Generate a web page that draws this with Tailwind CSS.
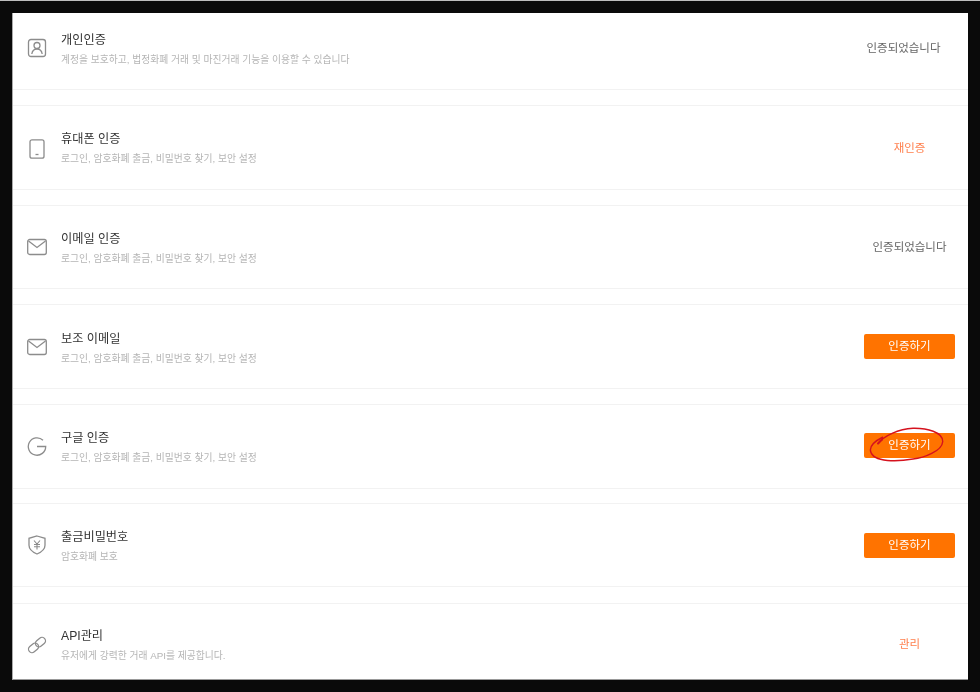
<!DOCTYPE html>
<html lang="ko">
<head>
    <meta charset="UTF-8">
    <title>보안 인증</title>
    <script src="https://cdn.jsdelivr.net/npm/@tailwindcss/browser@4"></script>
</head>
<body class="bg-[#0a0a0a] font-['Liberation_Sans','Noto_Sans_CJK_KR',sans-serif]">
    <div class="w-[980px] h-[692px] overflow-hidden border-t border-t-[#bdbdbd] pt-3 pl-3 pr-3 pb-3">
        <div class="bg-white h-[667px] overflow-hidden border-b border-b-[#999] border-l border-l-[#aaa] blur-[0.45px]">

            <!-- 개인인증 -->
            <div class="h-[77px] border-b border-[#f2f2f2] mb-[15px] pl-[14px] pr-[13px] pb-[5px] flex items-center justify-between">
                <div class="flex items-center">
                    <svg class="w-5 h-5 mr-[14px] mb-[2px]" viewBox="0 0 20 20" fill="none" stroke="#8c8c8c" stroke-width="1.3">
                        <rect x="1.500" y="1.500" width="17" height="17" rx="2.500"/>
                        <circle cx="10" cy="7.500" r="3"/>
                        <path d="M4.800 16c.5-3 2.500-5 5.200-5s4.700 2 5.200 5"/>
                    </svg>
                    <div class="pt-[3px]">
                        <p class="text-[12.2px] leading-4 text-[#333]">개인인증</p>
                        <p class="text-[9.8px] leading-4 mt-1 text-[#b5b5b5]">계정을 보호하고, 법정화폐 거래 및 마진거래 기능을 이용할 수 있습니다</p>
                    </div>
                </div>
                <span class="w-[103px] text-center text-[11.5px] text-[#666]">인증되었습니다</span>
            </div>

            <!-- 휴대폰 인증 -->
            <div class="h-[85px] border-y border-[#f2f2f2] mb-[15px] pl-[14px] pr-[13px] pt-[2px] flex items-center justify-between">
                <div class="flex items-center">
                    <svg class="w-5 h-5 mr-[14px]" viewBox="0 0 20 20" fill="none" stroke="#8c8c8c" stroke-width="1.3">
                        <rect x="3" y="0.800" width="14" height="18.400" rx="2"/>
                        <path d="M8.500 15.500h3"/>
                    </svg>
                    <div>
                        <p class="text-[12.2px] leading-4 text-[#333]">휴대폰 인증</p>
                        <p class="text-[9.8px] leading-4 mt-1 text-[#b5b5b5]">로그인, 암호화폐 출금, 비밀번호 찾기, 보안 설정</p>
                    </div>
                </div>
                <span class="w-[91px] text-center text-[11.5px] text-[#ff7f4d]">재인증</span>
            </div>

            <!-- 이메일 인증 -->
            <div class="h-[84px] border-y border-[#f2f2f2] mb-[15px] pl-[14px] pr-[13px] pt-[2px] flex items-center justify-between">
                <div class="flex items-center">
                    <svg class="w-5 h-5 mr-[14px] mb-[2px]" viewBox="0 0 20 20" fill="none" stroke="#8c8c8c" stroke-width="1.3">
                        <rect x="0.700" y="2.500" width="18.600" height="15" rx="2"/>
                        <path d="M1.500 4l8.500 6.500L18.500 4"/>
                    </svg>
                    <div class="pt-[2px]">
                        <p class="text-[12.2px] leading-4 text-[#333]">이메일 인증</p>
                        <p class="text-[9.8px] leading-4 mt-1 text-[#b5b5b5]">로그인, 암호화폐 출금, 비밀번호 찾기, 보안 설정</p>
                    </div>
                </div>
                <span class="w-[91px] text-center text-[11.5px] text-[#666]">인증되었습니다</span>
            </div>

            <!-- 보조 이메일 -->
            <div class="h-[85px] border-y border-[#f2f2f2] mb-[15px] pl-[14px] pr-[13px] pt-[2px] flex items-center justify-between">
                <div class="flex items-center">
                    <svg class="w-5 h-5 mr-[14px] mb-[2px]" viewBox="0 0 20 20" fill="none" stroke="#8c8c8c" stroke-width="1.3">
                        <rect x="0.700" y="2.500" width="18.600" height="15" rx="2"/>
                        <path d="M1.500 4l8.500 6.500L18.500 4"/>
                    </svg>
                    <div class="pt-[2px]">
                        <p class="text-[12.2px] leading-4 text-[#333]">보조 이메일</p>
                        <p class="text-[9.8px] leading-4 mt-1 text-[#b5b5b5]">로그인, 암호화폐 출금, 비밀번호 찾기, 보안 설정</p>
                    </div>
                </div>
                <button class="w-[91px] h-[25px] mb-[2px] rounded-[2px] bg-[#ff7300] text-white text-[11.5px]">인증하기</button>
            </div>

            <!-- 구글 인증 -->
            <div class="h-[85px] border-y border-[#f2f2f2] mb-[14px] pl-[14px] pr-[13px] pt-[2px] flex items-center justify-between">
                <div class="flex items-center">
                    <svg class="w-5 h-5 mr-[14px] mb-[3px]" viewBox="0 0 20 20" fill="none" stroke="#8c8c8c" stroke-width="1.3">
                        <path d="M16 4.200a8.700 8.700 0 1 0 2.700 6.300H10"/>
                    </svg>
                    <div>
                        <p class="text-[12.2px] leading-4 text-[#333]">구글 인증</p>
                        <p class="text-[9.8px] leading-4 mt-1 text-[#b5b5b5]">로그인, 암호화폐 출금, 비밀번호 찾기, 보안 설정</p>
                    </div>
                </div>
                <div class="relative mb-[4px]">
                    <button class="block w-[91px] h-[25px] rounded-[2px] bg-[#ff7300] text-white text-[11.5px]">인증하기</button>
                    <svg class="absolute left-[5px] -top-[6px] w-[75px] h-[36px]" viewBox="0 0 75 36" fill="none" stroke="#d5121e" stroke-width="1.400">
                        <path d="M9 17C14 9 30 2 44 1.300 58 1 74 5 73.700 14.700 73 24 55 31 44 32 30 34.500 4 36 1.500 24 .5 18 8 13 14 10"/>
                        <path d="M9 16.500l4-4" stroke-width="2" stroke-linecap="round"/>
                    </svg>
                </div>
            </div>

            <!-- 출금비밀번호 -->
            <div class="h-[84px] border-y border-[#f2f2f2] mb-[16px] pl-[14px] pr-[13px] pt-[2px] flex items-center justify-between">
                <div class="flex items-center">
                    <svg class="w-5 h-5 mr-[14px] mb-[2px]" viewBox="0 0 20 20" fill="none" stroke="#8c8c8c" stroke-width="1.3">
                        <path d="M10 1l8 2.300v7c0 4-3.500 6.800-8 8.700-4.500-1.900-8-4.700-8-8.700v-7z"/>
                        <path d="M7 5.500l3 3.500 3-3.500M7 9.500h6M7 11.800h6M10 9v5.500" stroke-width="1.100"/>
                    </svg>
                    <div class="pt-[2px]">
                        <p class="text-[12.2px] leading-4 text-[#333]">출금비밀번호</p>
                        <p class="text-[9.8px] leading-4 mt-1 text-[#b5b5b5]">암호화폐 보호</p>
                    </div>
                </div>
                <button class="w-[91px] h-[25px] mb-[1px] rounded-[2px] bg-[#ff7300] text-white text-[11.5px]">인증하기</button>
            </div>

            <!-- API관리 -->
            <div class="h-[76px] border-t border-[#f2f2f2] pl-[14px] pr-[13px] pt-[7px] flex items-center justify-between">
                <div class="flex items-center">
                    <svg class="w-5 h-5 mr-[14px]" viewBox="0 0 20 20" fill="none" stroke="#8c8c8c" stroke-width="1.300">
                        <g transform="rotate(-40 10 10)">
                            <rect x="0" y="6.500" width="11" height="7" rx="3.500"/>
                            <rect x="9" y="6.500" width="11" height="7" rx="3.500"/>
                        </g>
                    </svg>
                    <div class="pt-[2px]">
                        <p class="text-[12.2px] leading-4 text-[#333]">API관리</p>
                        <p class="text-[9.8px] leading-4 mt-1 text-[#b5b5b5]">유저에게 강력한 거래 API를 제공합니다.</p>
                    </div>
                </div>
                <span class="w-[91px] text-center text-[11.5px] text-[#ff7f4d]">관리</span>
            </div>

        </div>
    </div>
</body>
</html>
